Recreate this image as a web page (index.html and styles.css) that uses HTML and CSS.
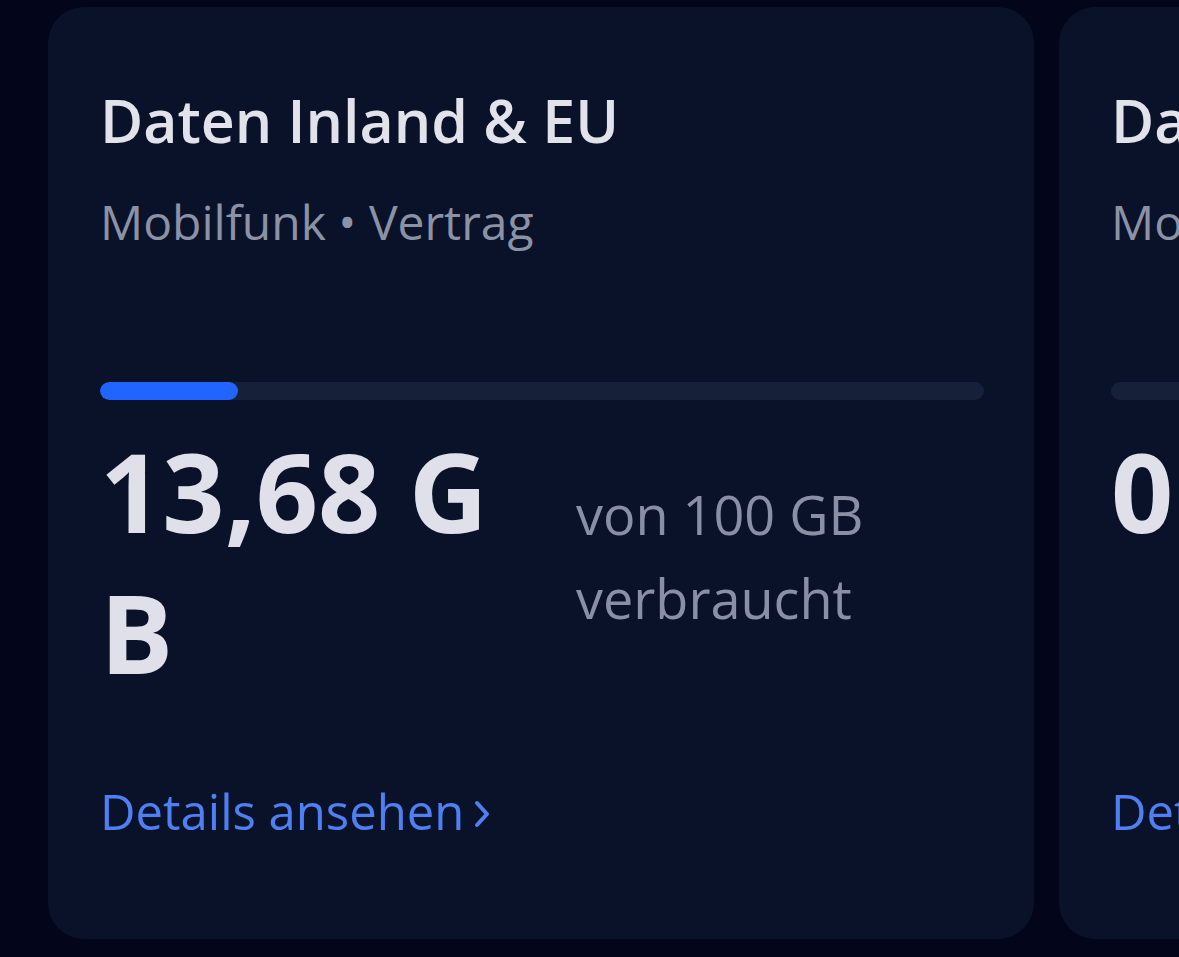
FILE: index.html
```html
<!DOCTYPE html>
<html lang="de">
<head>
<meta charset="utf-8">
<title>Datenverbrauch</title>
<link rel="stylesheet" href="styles.css">
</head>
<body>
<div class="track-row">
  <section class="card">
    <h2 class="card-title">Daten Inland &amp; EU</h2>
    <p class="card-sub">Mobilfunk • Vertrag</p>
    <div class="bar"><div class="bar-fill" style="width:15.6%"></div></div>
    <div class="usage">
      <div class="usage-value">13,68&nbsp;GB</div>
      <div class="usage-of">von 100 GB verbraucht</div>
    </div>
    <a class="card-link" href="#">Details ansehen<svg class="chev" viewBox="0 0 16 28" width="16" height="28" aria-hidden="true"><path d="M3 3 L13 14 L3 25" fill="none" stroke="currentColor" stroke-width="4" stroke-linecap="round" stroke-linejoin="round"/></svg></a>
  </section>
  <section class="card">
    <h2 class="card-title">Daten Roaming</h2>
    <p class="card-sub">Mobilfunk • Vertrag</p>
    <div class="bar"><div class="bar-fill" style="width:0%"></div></div>
    <div class="usage">
      <div class="usage-value">0&nbsp;GB</div>
      <div class="usage-of">von 10 GB verbraucht</div>
    </div>
    <a class="card-link" href="#">Details ansehen<svg class="chev" viewBox="0 0 16 28" width="16" height="28" aria-hidden="true"><path d="M3 3 L13 14 L3 25" fill="none" stroke="currentColor" stroke-width="4" stroke-linecap="round" stroke-linejoin="round"/></svg></a>
  </section>
</div>
</body>
</html>
```

FILE: styles.css
```css
html, body {
  margin: 0;
  padding: 0;
  background: #03051a;
  height: 957px;
  overflow: hidden;
}
body {
  font-family: "Open Sans", "Lato", sans-serif;
}
.track-row {
  display: flex;
  gap: 25px;
  padding: 7px 0 0 48px;
  width: max-content;
}
.card {
  flex: 0 0 auto;
  width: 986px;
  height: 932px;
  box-sizing: border-box;
  background: #0a1229;
  border-radius: 36px;
  padding: 73px 50px 96px 52px;
  display: flex;
  flex-direction: column;
}
.card-title {
  margin: 0;
  font-size: 59px;
  line-height: 80px;
  font-weight: 600;
  color: #e1e2ea;
}
.card-sub {
  margin: 30px 0 0;
  font-size: 48px;
  line-height: 64px;
  color: #8c92a6;
}
.bar {
  margin-top: 128px;
  height: 18px;
  border-radius: 9px;
  background: #172039;
  overflow: hidden;
  flex: 0 0 auto;
}
.bar-fill {
  height: 100%;
  border-radius: 9px;
  background: #2065ff;
}
.usage {
  display: grid;
  grid-template-columns: 424px 1fr;
  column-gap: 52px;
  margin-top: 20px;
}
.usage-value {
  font-size: 109px;
  line-height: 141px;
  font-weight: 700;
  color: #dfe0e9;
  word-break: break-all;
  overflow-wrap: anywhere;
}
.usage-of {
  padding-top: 52px;
  font-size: 54px;
  line-height: 84px;
  color: #898fa4;
}
.card-link {
  margin-top: auto;
  font-size: 49px;
  line-height: 64px;
  font-weight: 500;
  color: #4d80f2;
  text-decoration: none;
  display: flex;
  align-items: center;
  gap: 10px;
  align-self: flex-start;
}
.chev {
  flex: 0 0 auto;
  margin-top: 6px;
}
```
